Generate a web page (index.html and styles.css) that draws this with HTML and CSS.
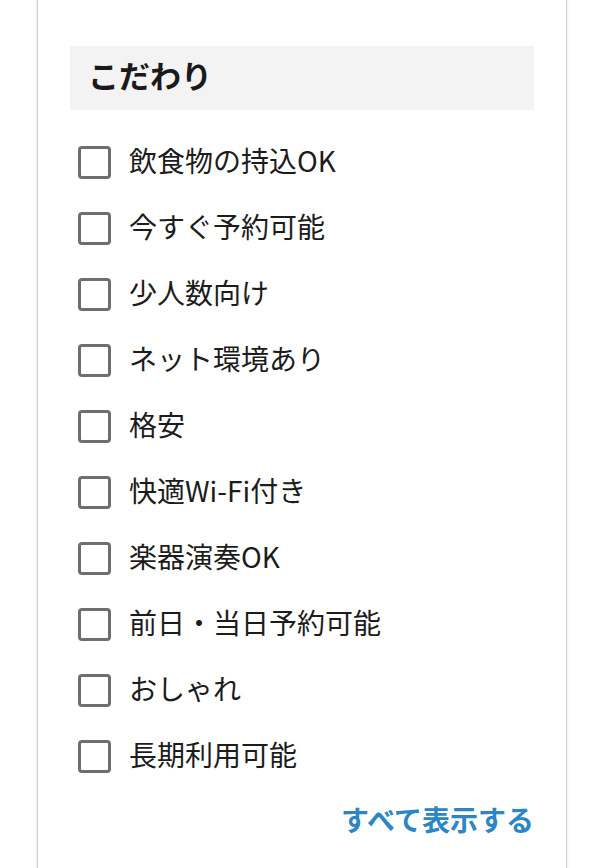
FILE: index.html
```html
<!DOCTYPE html>
<html lang="ja">
<head>
<meta charset="utf-8">
<link rel="stylesheet" href="styles.css">
</head>
<body>
<div class="page">
  <section class="card">
    <h2 class="card-title">こだわり</h2>
    <ul class="options">
      <li class="option"><span class="box"></span><span class="label">飲食物の持込OK</span></li>
      <li class="option"><span class="box"></span><span class="label">今すぐ予約可能</span></li>
      <li class="option"><span class="box"></span><span class="label">少人数向け</span></li>
      <li class="option"><span class="box"></span><span class="label">ネット環境あり</span></li>
      <li class="option"><span class="box"></span><span class="label">格安</span></li>
      <li class="option"><span class="box"></span><span class="label">快適Wi-Fi付き</span></li>
      <li class="option"><span class="box"></span><span class="label">楽器演奏OK</span></li>
      <li class="option"><span class="box"></span><span class="label">前日・当日予約可能</span></li>
      <li class="option"><span class="box"></span><span class="label">おしゃれ</span></li>
      <li class="option"><span class="box"></span><span class="label">長期利用可能</span></li>
    </ul>
    <div class="more"><a class="more-link" href="#">すべて表示する</a></div>
  </section>
</div>
</body>
</html>
```
FILE: styles.css
```css
html, body {
  margin: 0;
  padding: 0;
  background: #ffffff;
}
body {
  font-family: "Noto Sans CJK JP", "Noto Sans", sans-serif;
  color: #1c1c1c;
}
.page {
  padding: 0 25px 0 37px;
}
.card {
  width: 530px;
  min-height: 900px;
  background: #fff;
  border-left: 1px solid #cfcfcf;
  border-right: 1px solid #cfcfcf;
  box-shadow: 0 0 3px rgba(0, 0, 0, 0.12);
  padding: 46px 32px 0 32px;
  box-sizing: border-box;
}
.card-title {
  margin: 0;
  height: 64px;
  background: #f3f3f3;
  padding-left: 18px;
  font-size: 31px;
  font-weight: 700;
  line-height: 58px;
  color: #1a1a1a;
}
.options {
  list-style: none;
  margin: 19px 0 0 0;
  padding: 0;
}
.option {
  height: 66px;
  display: flex;
  align-items: center;
  padding-left: 8px;
}
.box {
  width: 33px;
  height: 33px;
  box-sizing: border-box;
  border: 3px solid #6e6e6e;
  border-radius: 4px;
  flex: none;
  margin-right: 18px;
}
.label {
  font-size: 28px;
  line-height: 1;
  padding-bottom: 4px;
}
.more {
  display: flex;
  justify-content: flex-end;
  padding-top: 12px;
}
.more-link {
  color: #2c86c4;
  font-weight: 700;
  font-size: 28px;
  text-decoration: none;
  line-height: 36px;
}
```
